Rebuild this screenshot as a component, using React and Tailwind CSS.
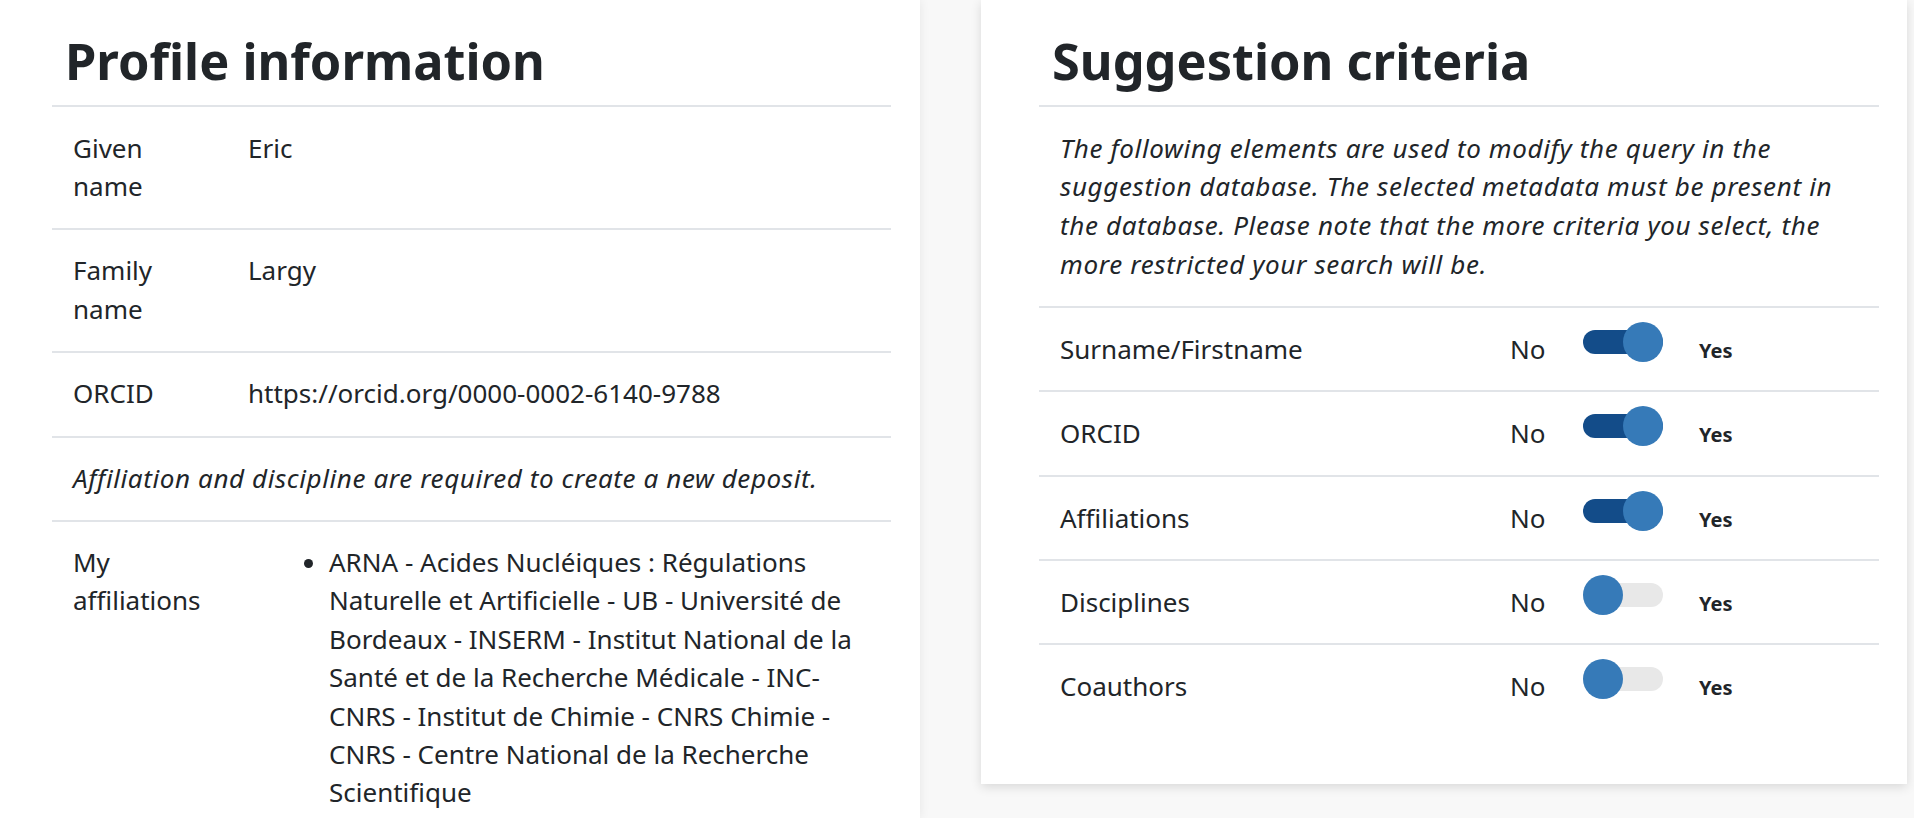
import { useState } from "react";

// Profile rows shown in the left panel
const profileRows = [
  { label: "Given name", value: "Eric" },
  { label: "Family name", value: "Largy" },
  { label: "ORCID", value: "https://orcid.org/0000-0002-6140-9788" },
];

const affiliations = [
  "ARNA - Acides Nucléiques : Régulations Naturelle et Artificielle - UB - Université de Bordeaux - INSERM - Institut National de la Santé et de la Recherche Médicale - INC-CNRS - Institut de Chimie - CNRS Chimie - CNRS - Centre National de la Recherche Scientifique",
];

const initialCriteria = [
  { name: "Surname/Firstname", on: true },
  { name: "ORCID", on: true },
  { name: "Affiliations", on: true },
  { name: "Disciplines", on: false },
  { name: "Coauthors", on: false },
];

function Toggle({ on, onClick }) {
  return (
    <button
      type="button"
      onClick={onClick}
      className={`relative block w-[80px] h-[24px] rounded-full ${on ? "bg-[#134c89]" : "bg-[#e8e8e8]"}`}
    >
      <span
        className={`absolute top-[-8px] w-[40px] h-[40px] rounded-full bg-[#367ab8] ${on ? "right-0" : "left-0"}`}
      />
    </button>
  );
}

export default function App() {
  const [criteria, setCriteria] = useState(initialCriteria);

  const toggle = (i) => {
    setCriteria((prev) => prev.map((c, idx) => (idx === i ? { ...c, on: !c.on } : c)));
  };

  return (
    <div className="h-[818px] overflow-hidden bg-[#f8f8f8] flex items-start font-['Noto_Sans',sans-serif] text-[#212529] text-[26px] leading-[38.4px]">
      {/* Left panel */}
      <section className="w-[920px] h-[818px] shrink-0 bg-white pl-[52px] pr-[29px] shadow-[0_0_10px_rgba(0,0,0,0.08)]">
        <h2 className="pl-[13px] pt-[30px] pb-[13px] text-[50.5px] leading-[61.5px] font-bold border-b-2 border-[#e1e4e8]">
          Profile information
        </h2>
        {profileRows.map((row, i) => (
          <div key={row.label} className="grid grid-cols-[175px_1fr] border-b-2 border-[#e1e4e8]">
            <div className={`px-[21px] pb-[23px] ${i === 0 ? "pt-[22px]" : "pt-[21px]"}`}>{row.label}</div>
            <div className={`px-[21px] pb-[23px] ${i === 0 ? "pt-[22px]" : "pt-[21px]"}`}>{row.value}</div>
          </div>
        ))}
        <div className="px-[21px] pt-[21px] pb-[23px] italic tracking-[0.6px] border-b-2 border-[#e1e4e8]">
          Affiliation and discipline are required to create a new deposit.
        </div>
        <div className="grid grid-cols-[175px_1fr]">
          <div className="px-[21px] pt-[21px] pb-[23px]">My affiliations</div>
          <div className="pr-[21px] pt-[21px] pb-[23px]">
            <ul className="list-disc pl-[102px]">
              {affiliations.map((a) => (
                <li key={a}>{a}</li>
              ))}
            </ul>
          </div>
        </div>
      </section>

      {/* Right card */}
      <section className="ml-[61px] w-[926px] shrink-0 bg-white pl-[58px] pr-[28px] pb-[56px] shadow-[0_3px_10px_rgba(0,0,0,0.13)]">
        <h2 className="pl-[13px] pt-[30px] pb-[13px] text-[50.5px] leading-[61.5px] font-bold border-b-2 border-[#e1e4e8]">
          Suggestion criteria
        </h2>
        <p className="px-[21px] py-[22px] italic tracking-[0.65px] leading-[38.8px] border-b-2 border-[#e1e4e8]">
          The following elements are used to modify the query in the suggestion database. The selected metadata must be
          present in the database. Please note that the more criteria you select, the more restricted your search will be.
        </p>
        {criteria.map((c, i) => (
          <div
            key={c.name}
            className={`flex items-start px-[21px] py-[22px] ${i < criteria.length - 1 ? "border-b-2 border-[#e1e4e8]" : ""}`}
          >
            <div className="w-[450px]">{c.name}</div>
            <div className="w-[73px]">No</div>
            <div className="w-[116px]">
              <Toggle on={c.on} onClick={() => toggle(i)} />
            </div>
            <div className="relative top-[2px] text-[20px] font-bold">Yes</div>
          </div>
        ))}
      </section>
    </div>
  );
}
